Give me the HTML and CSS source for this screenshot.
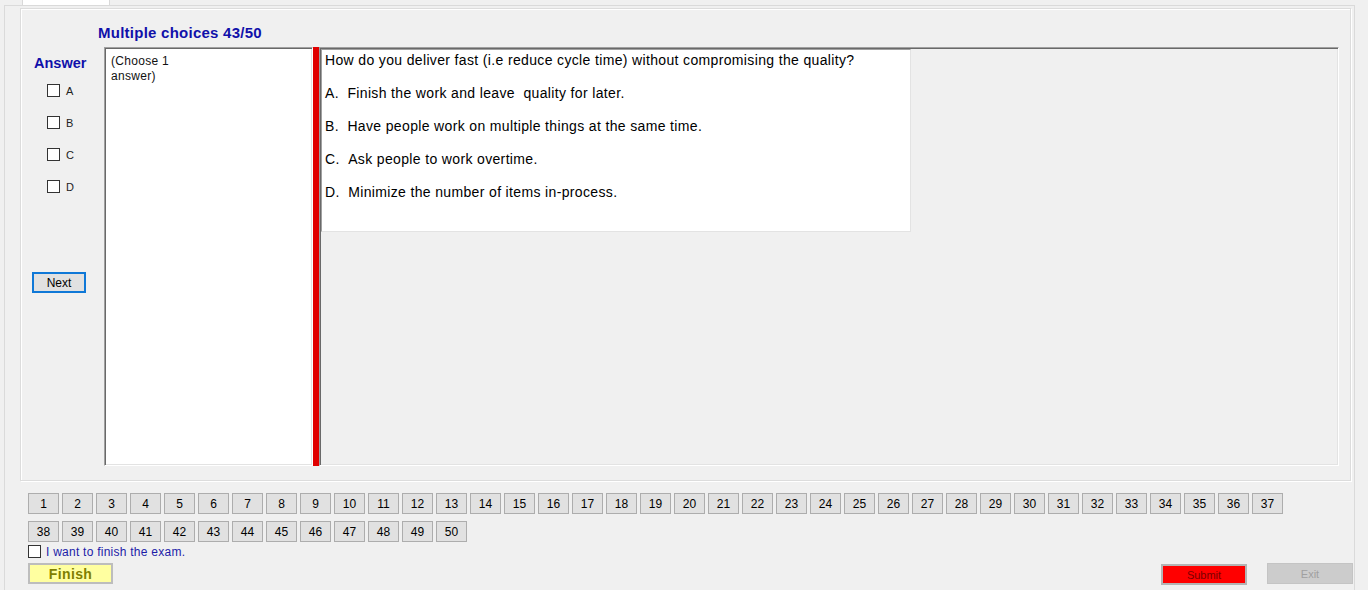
FILE: index.html
```html
<!DOCTYPE html>
<html>
<head>
<meta charset="utf-8">
<link rel="stylesheet" href="styles.css">
</head>
<body>
<div class="window">
  <div class="tabstrip"><div class="tab"></div></div>
  <div class="page">
    <div class="group">
      <div class="title">Multiple choices 43/50</div>
      <div class="main">
        <div class="answer-col">
          <div class="answer-title">Answer</div>
          <div class="choices">
            <div class="choice"><span class="box"></span><span>A</span></div>
            <div class="choice"><span class="box"></span><span>B</span></div>
            <div class="choice"><span class="box"></span><span>C</span></div>
            <div class="choice"><span class="box"></span><span>D</span></div>
          </div>
          <button class="next-btn">Next</button>
        </div>
        <div class="textbox">(Choose 1<br>answer)</div>
        <div class="splitter"></div>
        <div class="right-panel">
          <div class="question">
            <p>How do you deliver fast (i.e reduce cycle time) without compromising the quality?</p>
            <p>A.&nbsp;&nbsp;Finish the work and leave &nbsp;quality for later.</p>
            <p>B.&nbsp;&nbsp;Have people work on multiple things at the same time.</p>
            <p>C.&nbsp;&nbsp;Ask people to work overtime.</p>
            <p>D.&nbsp;&nbsp;Minimize the number of items in-process.</p>
          </div>
        </div>
      </div>
    </div>
    <div class="nav">
      <button class="num">1</button><button class="num">2</button><button class="num">3</button><button class="num">4</button><button class="num">5</button><button class="num">6</button><button class="num">7</button><button class="num">8</button><button class="num">9</button><button class="num">10</button>
      <button class="num">11</button><button class="num">12</button><button class="num">13</button><button class="num">14</button><button class="num">15</button><button class="num">16</button><button class="num">17</button><button class="num">18</button><button class="num">19</button><button class="num">20</button>
      <button class="num">21</button><button class="num">22</button><button class="num">23</button><button class="num">24</button><button class="num">25</button><button class="num">26</button><button class="num">27</button><button class="num">28</button><button class="num">29</button><button class="num">30</button>
      <button class="num">31</button><button class="num">32</button><button class="num">33</button><button class="num">34</button><button class="num">35</button><button class="num">36</button><button class="num">37</button><button class="num">38</button><button class="num">39</button><button class="num">40</button>
      <button class="num">41</button><button class="num">42</button><button class="num">43</button><button class="num">44</button><button class="num">45</button><button class="num">46</button><button class="num">47</button><button class="num">48</button><button class="num">49</button><button class="num">50</button>
    </div>
    <div class="confirm"><span class="box"></span><span>I want to finish the exam.</span></div>
    <div class="actions">
      <button class="finish">Finish</button>
      <div class="right-actions">
        <button class="submit">Submit</button>
        <button class="exit">Exit</button>
      </div>
    </div>
  </div>
</div>
</body>
</html>
```
FILE: styles.css
```css
* { box-sizing: border-box; }
body {
  margin: 0;
  background: #ffffff;
  font-family: "Liberation Sans", Arial, sans-serif;
  color: #000;
}
button {
  font-family: "Liberation Sans", Arial, sans-serif;
  padding: 0;
  margin: 0;
  cursor: default;
}
.window {
  width: 1368px;
  height: 590px;
  background: #f0f0f0;
  overflow: hidden;
}
.tabstrip {
  height: 5px;
  padding-left: 22px;
}
.tab {
  width: 88px;
  height: 5px;
  background: #ffffff;
  border-left: 1px solid #d9d9d9;
  border-right: 1px solid #d9d9d9;
}
.page {
  margin-left: 4px;
  width: 1351px;
  height: 585px;
  border: 1px solid #dadada;
  border-bottom: none;
  padding: 2px 0 0 15px;
}
.group {
  width: 1331px;
  height: 473px;
  border: 1px solid #dcdcdc;
  box-shadow: 1px 1px 0 #ffffff, inset 1px 1px 0 #ffffff;
}
.title {
  height: 38px;
  padding: 15px 0 0 77px;
  font-weight: bold;
  font-size: 15px;
  line-height: 17px;
  letter-spacing: 0.25px;
  color: #1010aa;
}
.main {
  display: flex;
  height: 419px;
}
.answer-col {
  width: 83px;
  display: flex;
  flex-direction: column;
  align-items: flex-start;
}
.answer-title {
  margin: 8px 0 0 13px;
  font-weight: bold;
  font-size: 14.5px;
  line-height: 17px;
  color: #1010aa;
}
.choices {
  margin: 12px 0 0 26px;
  display: flex;
  flex-direction: column;
  gap: 19px;
}
.choice {
  display: flex;
  align-items: center;
  height: 13px;
  gap: 6px;
  font-size: 11px;
  color: #222;
}
.box {
  display: inline-block;
  width: 13px;
  height: 13px;
  border: 1px solid #333333;
  background: #ffffff;
  flex: none;
}
.next-btn {
  margin: 79px 0 0 11px;
  width: 54px;
  height: 21px;
  border: 2px solid #0f78d7;
  background: #e1e1e1;
  font-size: 12px;
  color: #000;
}
.textbox {
  width: 209px;
  background: #ffffff;
  border: 1px solid;
  border-color: #a0a0a0 #ffffff #ffffff #a0a0a0;
  box-shadow: inset 1px 1px 0 #696969, inset -1px -1px 0 #e3e3e3;
  padding: 6px 4px 0 6px;
  font-size: 12px;
  line-height: 15px;
  letter-spacing: 0.3px;
  color: #111;
}
.splitter {
  width: 6px;
  background: #e00000;
}
.right-panel {
  width: 1020px;
  border: 1px solid;
  border-color: #a0a0a0 #ffffff #ffffff #a0a0a0;
  box-shadow: inset 1px 1px 0 #696969, inset -1px -1px 0 #e3e3e3;
  padding: 1px 0 0 1px;
}
.question {
  width: 590px;
  height: 183px;
  background: #ffffff;
  border: 1px solid;
  border-color: #a0a0a0 #e3e3e3 #e3e3e3 #a0a0a0;
  padding: 2px 0 0 3px;
  font-size: 14px;
  letter-spacing: 0.35px;
}
.question p {
  margin: 0 0 17px;
  line-height: 16px;
}
.nav {
  margin: 12px 0 0 8px;
  width: 1255px;
  display: flex;
  flex-wrap: wrap;
  column-gap: 3px;
  row-gap: 7px;
}
.num {
  width: 31px;
  height: 21px;
  background: #e1e1e1;
  border: 1px solid #adadad;
  font-size: 12px;
  color: #000;
}
.confirm {
  margin: 3px 0 0 8px;
  height: 13px;
  display: flex;
  align-items: center;
  gap: 5px;
  font-size: 12px;
  letter-spacing: 0.25px;
  color: #1c1ca8;
}
.actions {
  margin: 5px 0 0 8px;
  width: 1325px;
  display: flex;
  justify-content: space-between;
  align-items: flex-start;
}
.finish {
  width: 85px;
  height: 21px;
  background: #ffffa0;
  border: 2px solid #bdbdbd;
  font-weight: bold;
  font-size: 14px;
  letter-spacing: 0.4px;
  color: #7f7f00;
}
.right-actions {
  display: flex;
  gap: 20px;
  align-items: flex-start;
}
.submit {
  margin-top: 1px;
  width: 86px;
  height: 21px;
  background: #ff0000;
  border: 2px solid #b4b4b4;
  font-size: 11px;
  color: #7a0000;
}
.exit {
  width: 86px;
  height: 21px;
  background: #cccccc;
  border: 1px solid #c4c4c4;
  font-size: 11px;
  color: #a0a0a0;
}
```
